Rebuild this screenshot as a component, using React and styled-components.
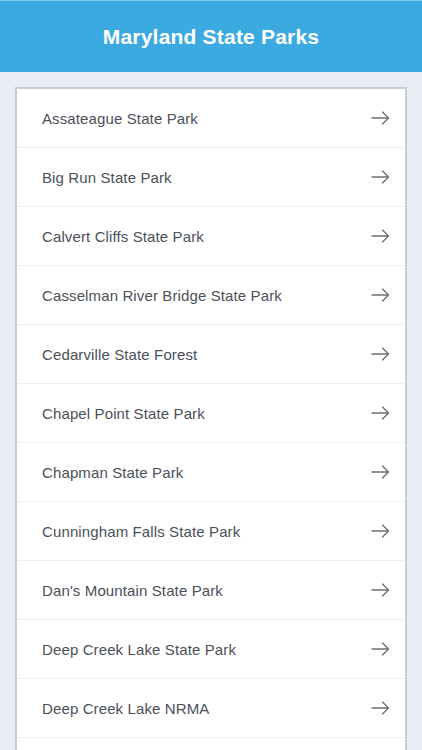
import React from 'react';
import styled, { createGlobalStyle } from 'styled-components';

const GlobalStyle = createGlobalStyle`
  html, body {
    margin: 0;
    padding: 0;
    background-color: #e9eef5;
    font-family: "Liberation Sans", Arial, sans-serif;
  }
`;

const Page = styled.div`
  display: flex;
  flex-direction: column;
  height: 100vh;
  overflow: hidden;
  background-color: #e9eef5;
`;

const Header = styled.header`
  flex: none;
  height: 72px;
  display: flex;
  align-items: center;
  justify-content: center;
  background-color: #3aaae1;
  border-top: 1px solid #7cc8ef;
  box-sizing: border-box;
  color: #fff;
`;

const Title = styled.h1`
  margin: 0;
  font-size: 21px;
  font-weight: bold;
  letter-spacing: 0.2px;
`;

const Content = styled.main`
  flex: 1;
  display: flex;
  flex-direction: column;
  padding: 15px 15px 0;
`;

const List = styled.ul`
  flex: 1;
  list-style: none;
  margin: 0;
  padding: 0;
  background-color: #fff;
  border: 2px solid #c9cdd3;
  border-bottom: none;
`;

const Row = styled.li`
  display: flex;
  align-items: center;
  justify-content: space-between;
  height: 58px;
  padding: 0 15px 0 25px;
  border-bottom: 1px solid #eceef1;
  color: #4b5059;
  font-size: 15px;
  letter-spacing: 0.12px;
`;

const Arrow = () => (
  <svg width="19" height="14" viewBox="0 0 19 14" fill="none">
    <path d="M1 7H17.5M11.5 1L17.5 7L11.5 13" stroke="#6b7079" strokeWidth="1.4" strokeLinecap="round" strokeLinejoin="round" />
  </svg>
);

const parks = [
  'Assateague State Park',
  'Big Run State Park',
  'Calvert Cliffs State Park',
  'Casselman River Bridge State Park',
  'Cedarville State Forest',
  'Chapel Point State Park',
  'Chapman State Park',
  'Cunningham Falls State Park',
  "Dan's Mountain State Park",
  'Deep Creek Lake State Park',
  'Deep Creek Lake NRMA',
];

const App = () => (
  <Page>
    <GlobalStyle />
    <Header>
      <Title>Maryland State Parks</Title>
    </Header>
    <Content>
      <List>
        {parks.map(name => (
          <Row key={name}>
            {name}
            <Arrow />
          </Row>
        ))}
      </List>
    </Content>
  </Page>
);

export default App;
